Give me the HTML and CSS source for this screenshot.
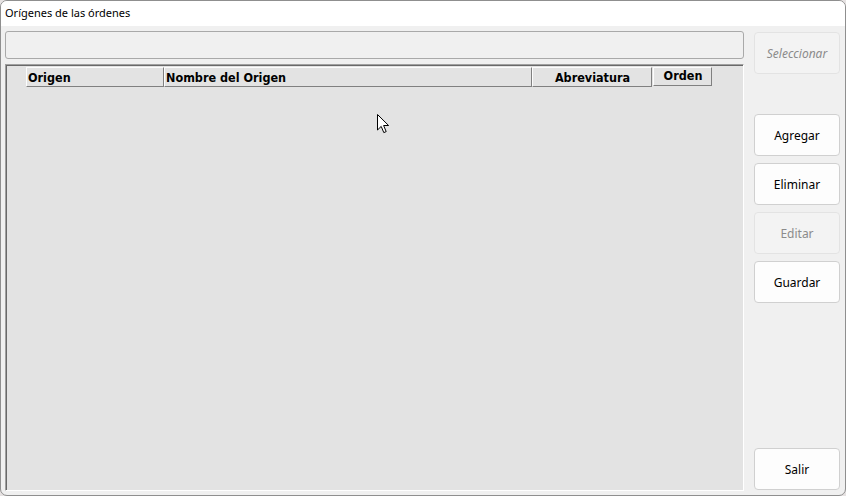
FILE: index.html
```html
<!DOCTYPE html>
<html lang="es">

<head>
    <meta charset="UTF-8">
    <meta name="viewport" content="width=device-width, initial-scale=1.0">
    <title>Orígenes de las órdenes</title>
    <link rel="stylesheet" href="styles.css">
</head>

<body>

    <div class="window">
        <!-- Barra de título -->
        <div class="titlebar">Orígenes de las órdenes</div>

        <div class="main">
            <div class="left-col">
                <div class="search-box"></div>

                <!-- Grilla de orígenes -->
                <div class="grid">
                    <div class="grid-header">
                        <div class="col col-origen">Origen</div>
                        <div class="col col-nombre">Nombre del Origen</div>
                        <div class="col col-abrev">Abreviatura</div>
                        <div class="col col-orden">Orden</div>
                    </div>
                    <svg class="cursor" width="13" height="20" viewBox="0 0 13 20">
                        <path d="M0.5 0.5 L0.5 16 L4.2 12.4 L6.8 18.6 L9.2 17.6 L6.6 11.5 L11.6 11.5 Z" fill="#fff" stroke="#000" stroke-width="1" stroke-linejoin="miter" />
                    </svg>
                </div>
            </div>

            <div class="right-col">
                <button class="btn btn-select" disabled>Seleccionar</button>
                <button class="btn btn-first">Agregar</button>
                <button class="btn">Eliminar</button>
                <button class="btn" disabled>Editar</button>
                <button class="btn">Guardar</button>
                <button class="btn btn-exit">Salir</button>
            </div>
        </div>
    </div>

</body>

</html>
```

FILE: styles.css
```css
body {
    margin: 0;
    padding: 0;
    background-color: #e6e2e2;
    font-family: 'Noto Sans', 'Open Sans', sans-serif;
}

.window {
    width: 846px;
    height: 496px;
    box-sizing: border-box;
    border: 1px solid #8f8f8f;
    border-radius: 7px;
    background-color: #f0f0f0;
    display: flex;
    flex-direction: column;
    overflow: hidden;
}

.titlebar {
    height: 25px;
    line-height: 24px;
    padding-left: 4px;
    background: #fff;
    font-size: 11px;
    color: #000;
}

.main {
    flex: 1;
    display: flex;
    gap: 10px;
    padding: 5px 5px 4px 4px;
}

.left-col {
    width: 739px;
    display: flex;
    flex-direction: column;
    gap: 5px;
}

.search-box {
    height: 28px;
    box-sizing: border-box;
    border: 1px solid #a9a9a9;
    border-radius: 3px;
    background: #f0f0f0;
}

.grid {
    position: relative;
    flex: 1;
    box-sizing: border-box;
    border: 1px solid;
    border-color: #a0a0a0 #fff #fff #a0a0a0;
    box-shadow: inset 1px 1px 0 #696969;
    background: #e3e3e3;
}

.grid-header {
    display: flex;
    margin: 2px 0 0 20px;
    height: 20px;
}

.col {
    box-sizing: border-box;
    height: 20px;
    border: 1px solid;
    border-color: #fcfcfc #808080 #808080 #fcfcfc;
    font-family: 'DejaVu Sans Condensed', 'DejaVu Sans', sans-serif;
    font-weight: bold;
    font-size: 12.5px;
    line-height: 20px;
    color: #000;
    padding-left: 1px;
    white-space: nowrap;
}

.col-origen {
    width: 138px;
}

.col-nombre {
    width: 368px;
}

.col-abrev {
    width: 120px;
    text-align: center;
}

.col-orden {
    width: 59px;
    margin-left: 1px;
    height: 19px;
    line-height: 16px;
    text-align: center;
}

.cursor {
    position: absolute;
    left: 371px;
    top: 49px;
}

.right-col {
    width: 86px;
    display: flex;
    flex-direction: column;
}

.btn {
    height: 42px;
    box-sizing: border-box;
    border: 1px solid #d0d0d0;
    border-radius: 4px;
    background: #fdfdfd;
    font-family: 'Noto Sans', 'Open Sans', sans-serif;
    font-size: 12px;
    color: #000;
    margin-bottom: 7px;
    padding: 0;
}

.btn:disabled {
    background: #f3f3f3;
    border-color: #e3e3e3;
    color: #8b8b8b;
}

.btn-select {
    margin-top: 1px;
    margin-bottom: 40px;
    font-style: italic;
}

.btn-exit {
    margin-top: auto;
    margin-bottom: 1px;
}
```
